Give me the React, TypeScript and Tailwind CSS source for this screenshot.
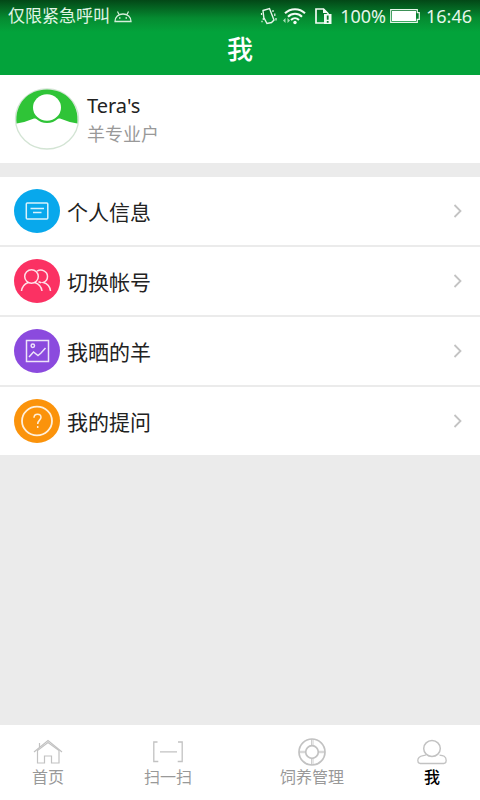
import type { ReactNode } from "react";

function AndroidIcon() {
  return (
    <svg width="18" height="14" viewBox="0 -2 18 14" fill="none" stroke="#d5efdb" aria-hidden="true">
      <path d="M1 10.500C1 6 4.500 3 9 3s8 3 8 7.500Z" strokeWidth="1.300" />
      <path d="M3.500 .5 5 3.500M14.500 .5 13 3.500" strokeWidth="1.200" />
      <path d="M5 7h1.500M11.500 7H13" strokeWidth="1.500" />
    </svg>
  );
}

function VibrateIcon() {
  return (
    <svg width="17" height="18" viewBox="0 0 17 18" fill="none" stroke="#e6f6ea" strokeWidth="1.400" aria-hidden="true">
      <path d="M3 3.500 9.500 1.500 14 13 11.500 15.500 7 16.500 3.800 10.500Z" />
      <path d="M1.500 6v2M3.300 11v2M2 13.800v1.500M13 3v2M14.800 6.500v2.500M16 11v2.500" strokeWidth="1.200" />
    </svg>
  );
}

function WifiIcon() {
  return (
    <svg width="24" height="18" viewBox="0 0 24 18" fill="none" stroke="#f2fbf4" strokeWidth="2" aria-hidden="true">
      <path d="M2 6.300C7.500 .800 16.500 .800 22 6.300M5 9.700C9 5.700 15 5.700 19 9.700M8 13c2.500-2.500 5.500-2.500 8 0" />
      <circle cx="12" cy="15.500" r="1.700" fill="#f2fbf4" stroke="none" />
      <path d="M0 13.500 2.500 11v5ZM4.500 11 7 13.500 4.500 16Z" fill="#a9dfb7" stroke="none" />
    </svg>
  );
}

function SimIcon() {
  return (
    <svg width="17" height="16" viewBox="0 0 17 16" fill="none" aria-hidden="true">
      <path d="M1 1h7.500l4.500 4.500V15H1Z" stroke="#f2fbf4" strokeWidth="1.700" />
      <path d="M8 1h1l4 4H8Z" fill="#f2fbf4" />
      <path d="M9 6H16.500V16H9Z" fill="#f2fbf4" />
      <path d="M12.700 7.500v4.200M12.700 12.900v1.800" stroke="#087c2d" strokeWidth="1.800" />
    </svg>
  );
}

function BatteryIcon() {
  return (
    <svg width="30" height="14" viewBox="0 0 30 14" aria-hidden="true">
      <path d="M.7.700h26.600v3h2v6.600h-2v3H.7Z" fill="none" stroke="#e6f6ea" strokeWidth="1.200" />
      <path d="M2 2h24v10H2Z" fill="#fff" />
    </svg>
  );
}

function Avatar() {
  return (
    <svg width="66" height="64" viewBox="0 0 66 64" className="shrink-0" role="img" aria-label="Tera's">
      <ellipse cx="33" cy="32" rx="31.500" ry="30" fill="#fff" stroke="#d3e4d4" strokeWidth="1.300" />
      <path d="M2.600 36.500C.5 17 14 2.500 33 2.500s32.500 14.500 30.400 34Q54 35 46 31.500H20Q12 35 2.600 36.500Z" fill="#2fc437" />
      <ellipse cx="33" cy="21.500" rx="15.500" ry="14.500" fill="#2fc437" />
      <ellipse cx="33" cy="20.500" rx="14" ry="13.200" fill="#fff" />
    </svg>
  );
}

function Badge({ color, children }: { color: string; children: ReactNode }) {
  return (
    <svg width="46" height="44" viewBox="0 0 46 44" fill="none" stroke="#fff" strokeOpacity=".85" strokeWidth="1.500" className="shrink-0" aria-hidden="true">
      <ellipse cx="23" cy="22" rx="23" ry="22" fill={color} stroke="none" />
      {children}
    </svg>
  );
}

const rows = [
  {
    label: "个人信息",
    color: "#08a8ec",
    art: (
      <>
        <rect x="12.300" y="14" width="21.500" height="16" rx="1" />
        <path d="M16.500 19.500h13.500M19 23.500h8.500" />
      </>
    ),
  },
  {
    label: "切换帐号",
    color: "#fb3163",
    art: (
      <>
        <ellipse cx="17.500" cy="17.500" rx="6.800" ry="6.800" />
        <path d="M7.500 32C8 28 10.500 25 14.200 23.500M20.800 23.500C25 25 27.500 28 28 32" />
        <path d="M23 12.200c4.500-2.800 10.500 0 10.500 5.300 0 3-1.700 5-4.200 6 4.500 1.200 6.700 4.200 7.200 8.500M24.500 22.700l2.700 1" />
      </>
    ),
  },
  {
    label: "我晒的羊",
    color: "#8b4ade",
    art: (
      <>
        <path d="M12.500 11.500h22v21h-22Z" />
        <circle cx="18.800" cy="16.800" r="1.700" />
        <path d="m15 28 4.500-5 4.500 3.500 3-2.500 4.500-5" />
      </>
    ),
  },
  {
    label: "我的提问",
    color: "#fb930b",
    art: (
      <>
        <ellipse cx="23" cy="22" rx="15" ry="14.300" strokeWidth="1.800" />
        <path d="M20 18.800c0-5 7-4.500 7-.5 0 2.800-3.300 3-3.300 6.700M23.700 27v2" />
      </>
    ),
  },
];

function Chevron() {
  return (
    <svg width="10" height="14" viewBox="0 0 10 14" fill="none" stroke="#c3c3c3" strokeWidth="1.800" aria-hidden="true">
      <path d="m1.500 1 6 6-6 6" />
    </svg>
  );
}

const tabs = [
  {
    label: "首页",
    grow: "grow-2 text-[#999]",
    art: (
      <>
        <path d="M1 13 15 1.500 29 13M6.500 8.500V4" />
        <path d="M4.500 11.500V24H11.500V17H18.500V24H26V11.500L15 3.500Z" />
      </>
    ),
  },
  {
    label: "扫一扫",
    grow: "grow-3 text-[#999]",
    art: <path d="M4.500 3H.8v19.500h4.500M25 3h4.200v19.500h-4.500M7 12.800h17" strokeWidth="1.300" />,
  },
  {
    label: "饲养管理",
    grow: "grow-3 text-[#999]",
    art: (
      <>
        <circle cx="15" cy="13" r="13" strokeWidth="1.700" />
        <circle cx="15" cy="13" r="6.300" strokeWidth="1.700" />
        <path d="M14.500 0v6.500M16 0v6.500M14.500 19.500V26M16 19.500V26M2 12.300h6.500M2 13.700h6.500M21.500 12.300H28M21.500 13.700H28" strokeWidth=".8" />
      </>
    ),
  },
  {
    label: "我",
    grow: "grow-2 font-medium text-black",
    art: (
      <>
        <ellipse cx="15" cy="9.500" rx="8.300" ry="8" strokeWidth="1.500" />
        <path d="M9 15.500C8 17.500 .8 15.500 .8 21.500c0 2 .8 3 2.500 3h23.400c1.700 0 2.500-1 2.500-3 0-4.500-3-5-6.700-5.300" strokeWidth="1.300" />
      </>
    ),
  },
];

export default function App() {
  return (
    <div className="flex min-h-screen flex-col bg-[#ebebeb] font-['Noto_Sans','Noto_Sans_CJK_SC',sans-serif] text-[#222]">
      <header className="bg-[#03a33b] bg-linear-to-b from-[#034817] via-[#058b31] via-[18px] to-[#03a33b] to-[32px] pb-2 text-white">
        <div className="flex h-8 items-center justify-between px-2 text-lg leading-8">
          <div className="flex items-center gap-1">
            <span className="text-[17px] text-[#e0f5e5]">仅限紧急呼叫</span>
            <AndroidIcon />
          </div>
          <div className="flex items-center text-[#e6f6ea]">
            <VibrateIcon />
            <span className="ml-1.5 flex items-center gap-2">
              <WifiIcon />
              <SimIcon />
            </span>
            <span className="ml-2">100%</span>
            <span className="ml-1">
              <BatteryIcon />
            </span>
            <span className="ml-1.5">16:46</span>
          </div>
        </div>
        <h1 className="text-center text-[26px] leading-[35px] font-medium">我</h1>
      </header>

      <main className="flex-1">
        <section className="flex h-[88px] items-center gap-[7px] bg-white pl-3.5">
          <Avatar />
          <div className="pt-0.5">
            <h2 className="text-xl leading-7">Tera's</h2>
            <p className="text-lg leading-7 text-[#999]">羊专业户</p>
          </div>
        </section>
        <ul className="mt-3.5">
          {rows.map((row) => (
            <li key={row.label} className="border-b-2 border-[#ebebeb] bg-white last:border-b-0">
              <button type="button" className="flex h-[68px] w-full items-center pr-[17px] pl-3.5 text-left">
                <Badge color={row.color}>{row.art}</Badge>
                <span className="ml-[7px] flex-1 pt-0.5 text-[21px] leading-8">{row.label}</span>
                <Chevron />
              </button>
            </li>
          ))}
        </ul>
      </main>

      <nav className="flex h-[75px] bg-white">
        {tabs.map((tab) => (
          <button key={tab.label} type="button" className={`flex basis-0 flex-col items-center pt-3.5 text-base leading-6 ${tab.grow}`}>
            <svg width="30" height="26" viewBox="0 0 30 26" fill="none" stroke="#c2c2c2" strokeWidth="1.200" overflow="visible" aria-hidden="true">
              {tab.art}
            </svg>
            <span>{tab.label}</span>
          </button>
        ))}
      </nav>
    </div>
  );
}
